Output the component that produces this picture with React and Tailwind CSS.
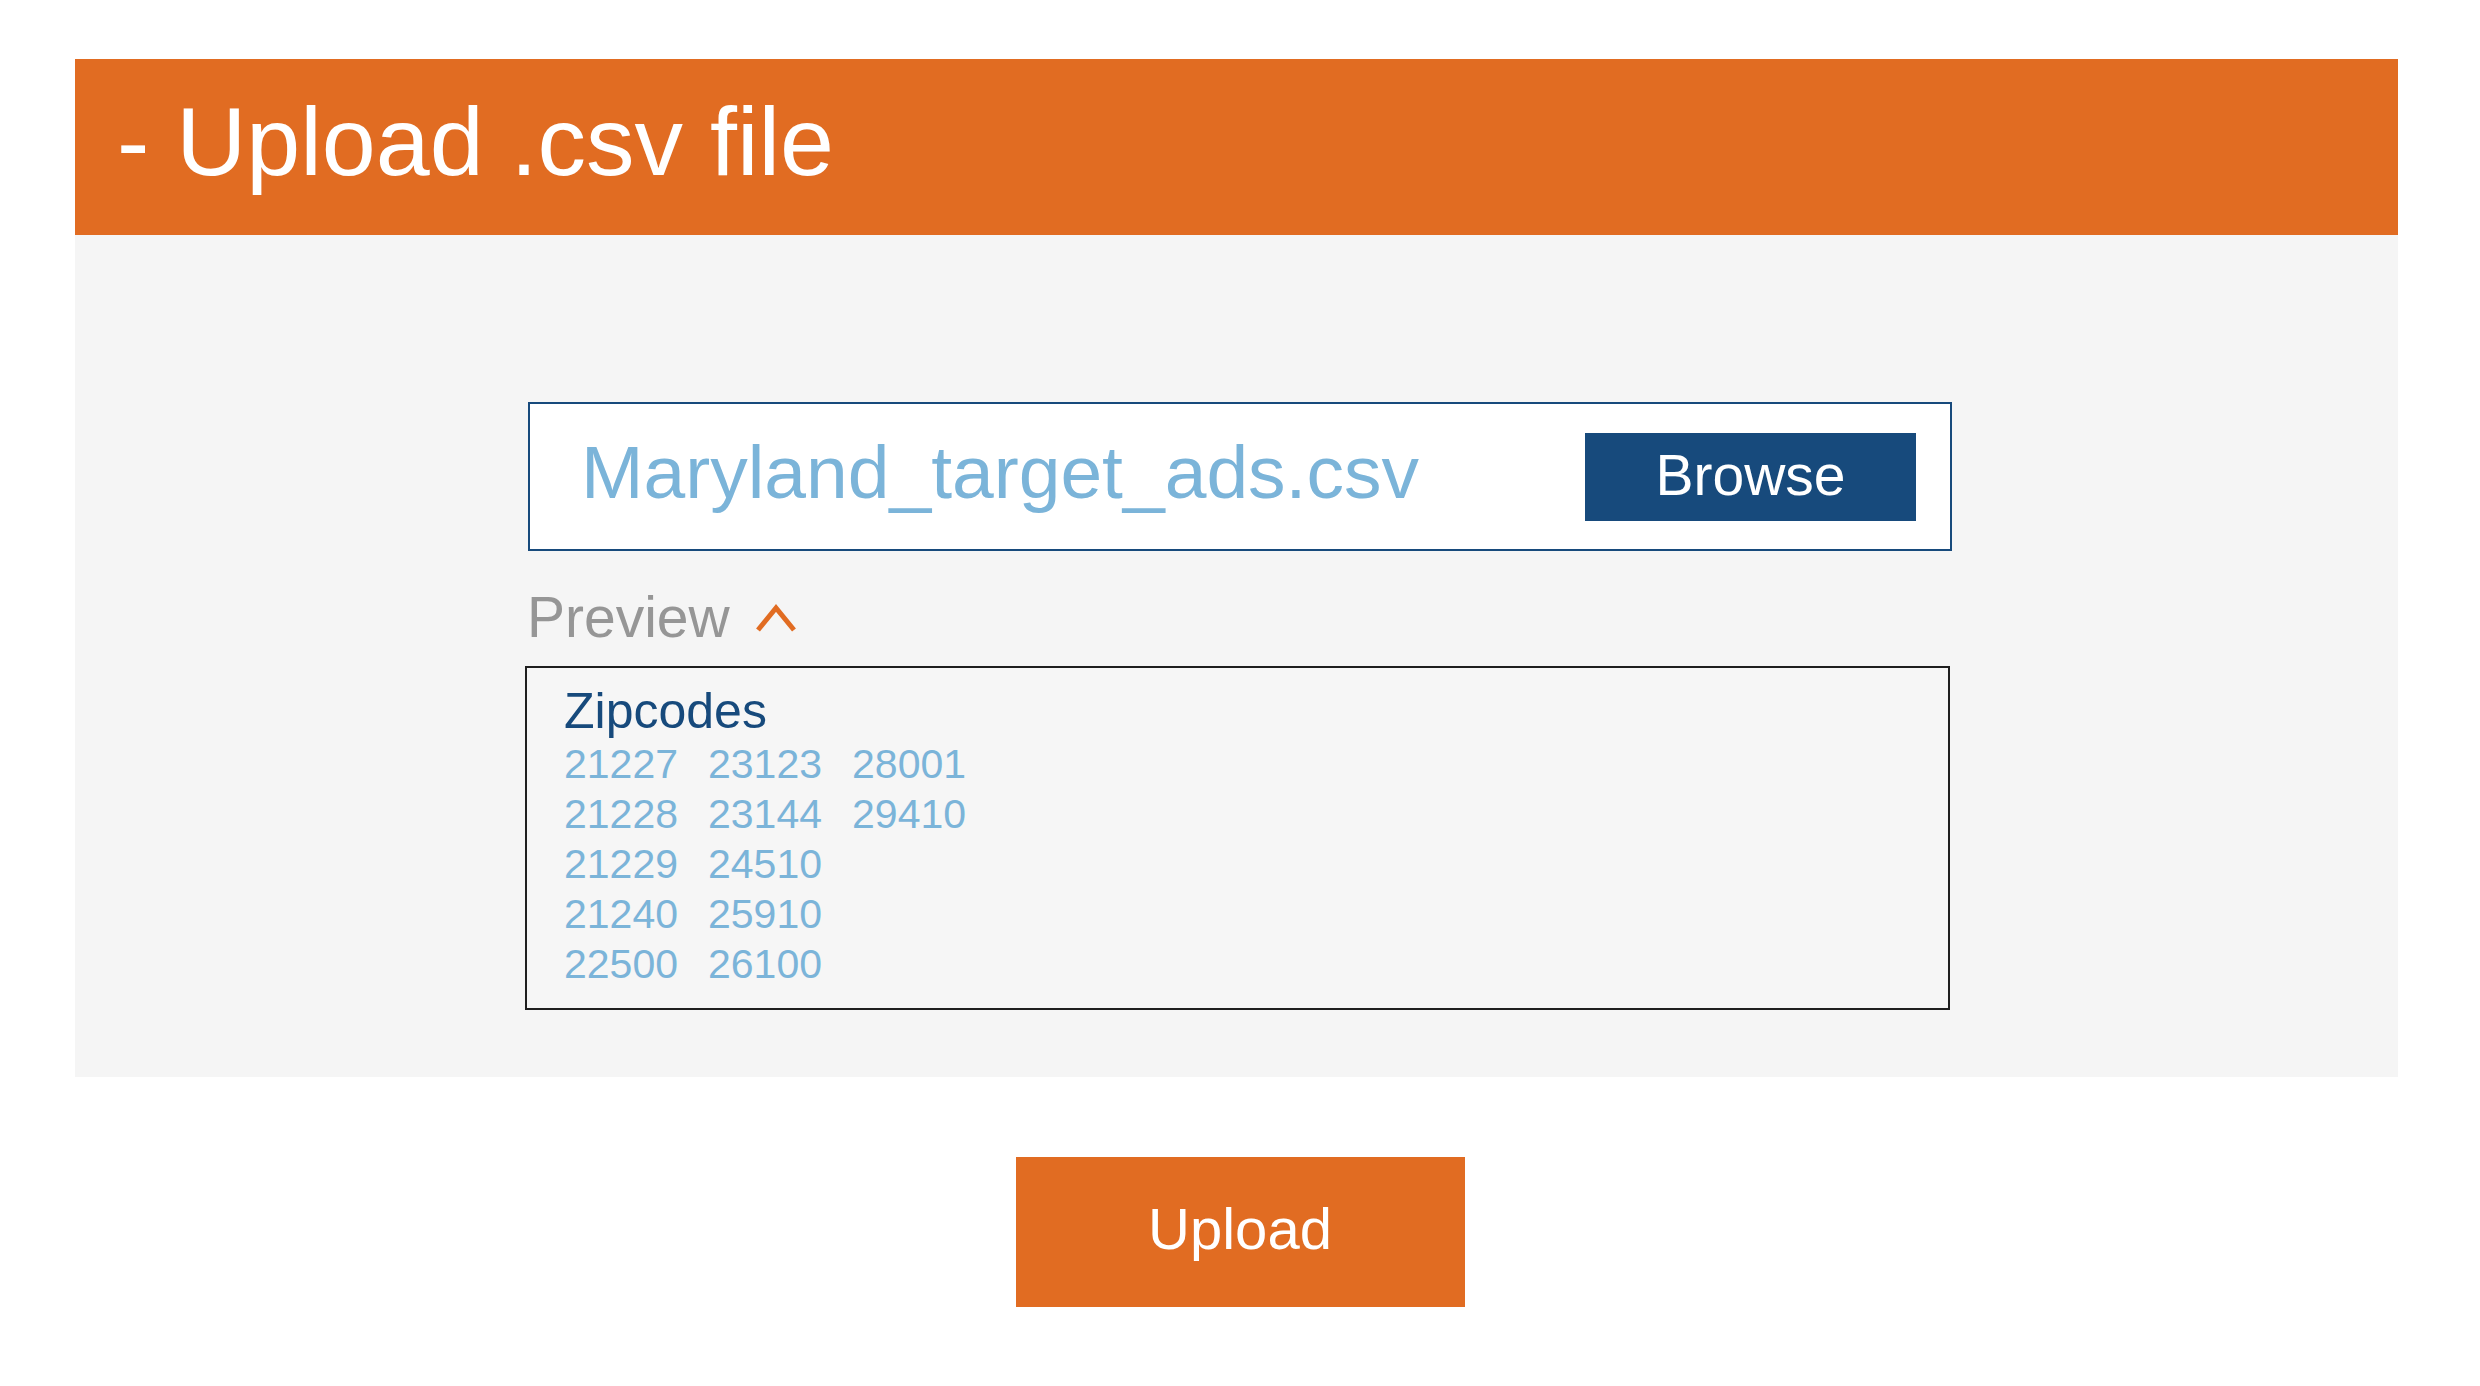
import { useState } from 'react';

const zipColumns = [
  ['21227', '21228', '21229', '21240', '22500'],
  ['23123', '23144', '24510', '25910', '26100'],
  ['28001', '29410'],
];

const ChevronUpIcon = () => (
  <svg width="40" height="30" viewBox="0 0 40 30" className="shrink-0">
    <polyline
      points="2,27 20,5 38,27"
      fill="none"
      stroke="#e16c22"
      strokeWidth="5"
      strokeLinejoin="miter"
      strokeLinecap="butt"
    />
  </svg>
);

const App = () => {
  const [showPreview, setShowPreview] = useState(true);

  return (
    <div className="w-[2480px] h-[1386px] bg-white font-['Liberation_Sans',Arial,sans-serif] pt-[59px] overflow-hidden">
      {/* Header bar */}
      <div className="ml-[75px] w-[2323px] h-[176px] bg-[#e16c22] pl-[42px] pt-[34px]">
        <h1 className="text-[97px] leading-none text-white font-normal">- Upload .csv file</h1>
      </div>

      {/* Gray panel */}
      <div className="ml-[75px] w-[2323px] h-[842px] bg-[#f5f5f5] pt-[167px]">
        <div className="ml-[450px] flex flex-col">
          {/* File chooser */}
          <div className="ml-[3px] w-[1424px] h-[149px] bg-white border-2 border-[#174a7c] flex items-center justify-between pl-[51px] pr-[34px]">
            <span className="text-[75px] leading-none text-[#7bb4d9] pb-[9px]">Maryland_target_ads.csv</span>
            <button className="w-[331px] h-[88px] bg-[#174a7c] text-white text-[57px] leading-none flex items-center justify-center pb-[3px]">
              Browse
            </button>
          </div>

          {/* Preview toggle */}
          <div
            className="mt-[38px] flex items-center gap-[26px] cursor-pointer"
            onClick={() => setShowPreview(!showPreview)}
          >
            <span className="text-[57px] leading-none text-[#969696] pl-[2px]">Preview</span>
            <ChevronUpIcon />
          </div>

          {/* Preview box */}
          {showPreview && (
            <div className="mt-[20px] w-[1425px] h-[344px] border-2 border-[#1f1f1f] bg-[#f6f6f6] pl-[37px] pt-[18px]">
              <div className="text-[50px] leading-[50px] text-[#174a7c]">Zipcodes</div>
              <div className="mt-[3px] flex gap-[30px]">
                {zipColumns.map((col, i) => (
                  <div key={i} className="flex flex-col">
                    {col.map((zip) => (
                      <span key={zip} className="text-[41px] leading-[50px] text-[#7bb4d9]">
                        {zip}
                      </span>
                    ))}
                  </div>
                ))}
              </div>
            </div>
          )}
        </div>
      </div>

      {/* Upload button */}
      <div className="mt-[80px] flex justify-center">
        <button className="w-[449px] h-[150px] bg-[#e16c22] text-white text-[58px] leading-none flex items-center justify-center pb-[6px]">
          Upload
        </button>
      </div>
    </div>
  );
};

export default App;
